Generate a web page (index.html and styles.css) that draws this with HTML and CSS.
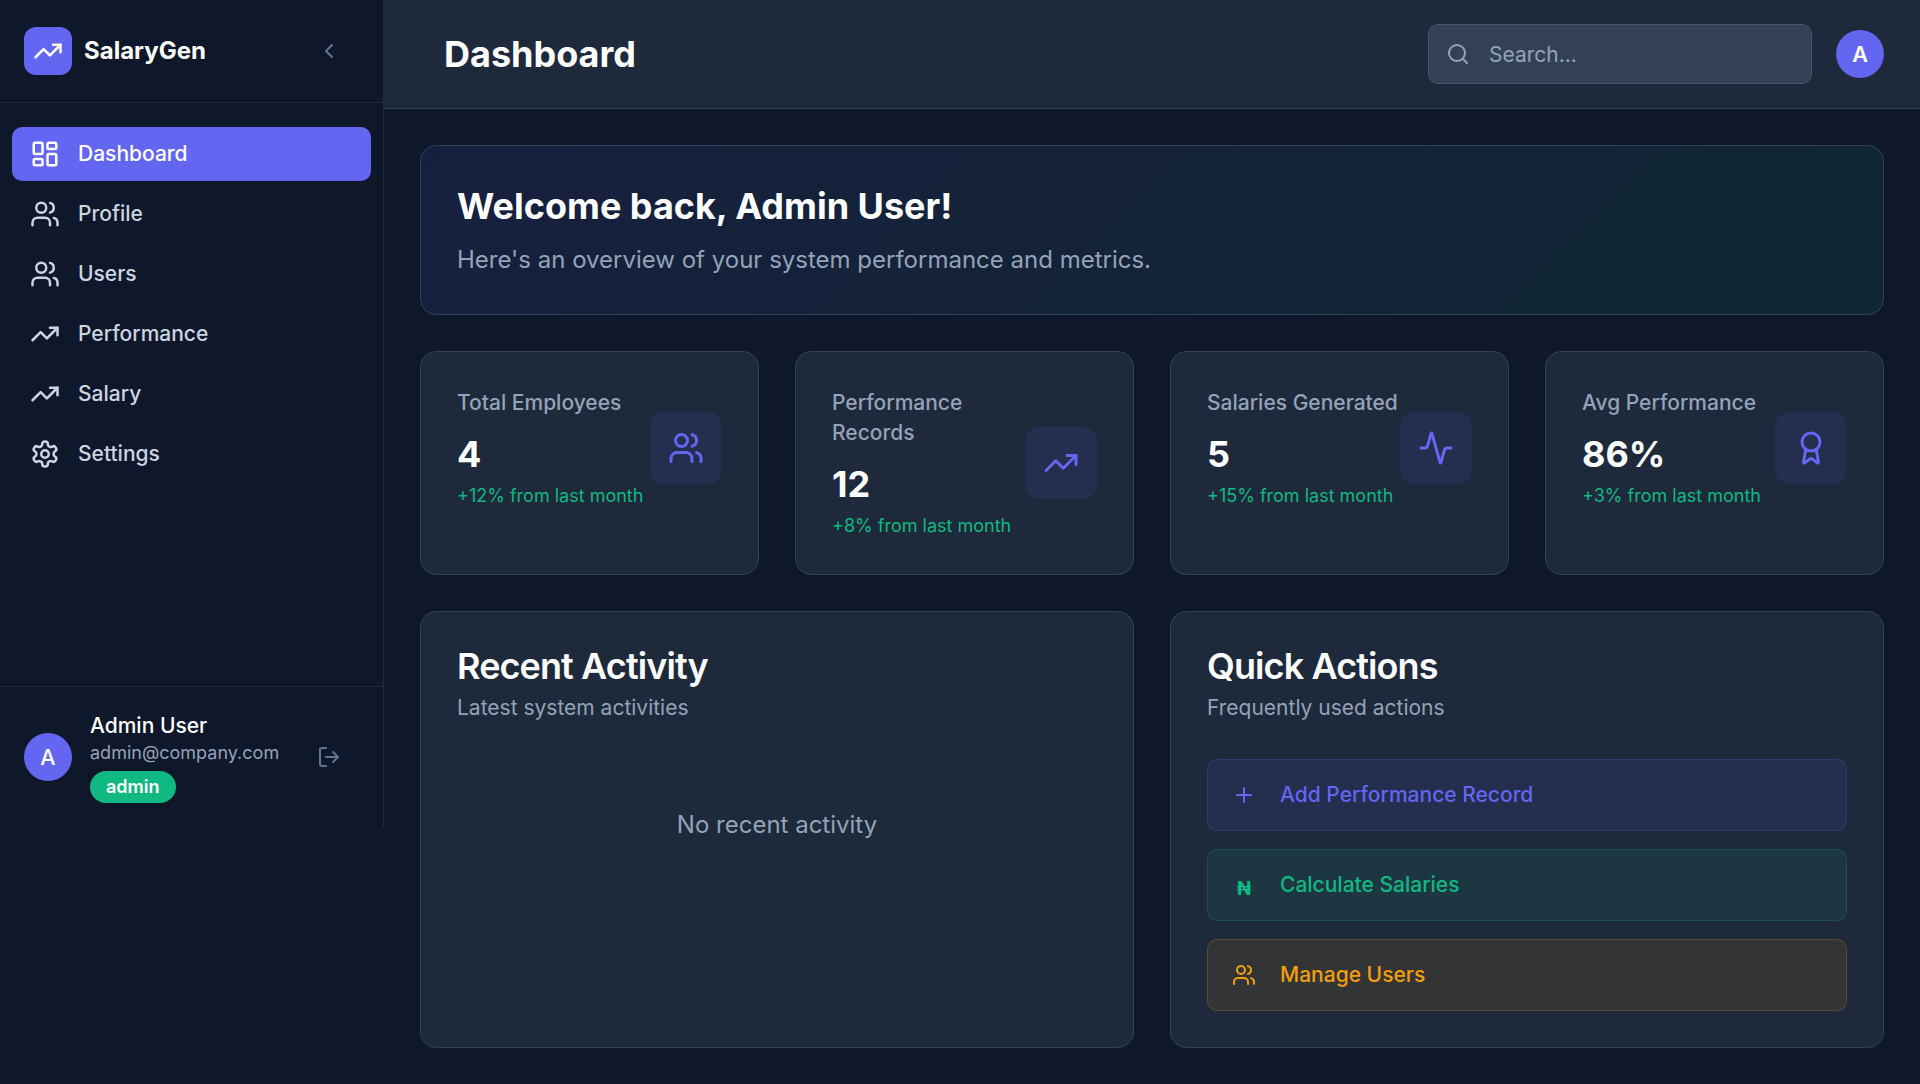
FILE: index.html
```html
<!DOCTYPE html>
<html lang="en">
<head>
    <meta charset="UTF-8">
    <meta name="viewport" content="width=device-width, initial-scale=1.0">
    <title>SalaryGen - Dashboard</title>
    <link rel="stylesheet" href="styles.css">
</head>
<body>
    <!-- Sidebar -->
    <aside class="sidebar">
        <div class="sidebar-header">
            <div class="logo-box">
                <svg class="icon icon-nav" viewBox="0 0 24 24"><polyline points="22 7 13.5 15.5 8.5 10.5 2 17"/><polyline points="16 7 22 7 22 13"/></svg>
            </div>
            <span class="logo-text">SalaryGen</span>
            <button class="side-btn">
                <svg class="icon icon-side" viewBox="0 0 24 24"><path d="m15 18-6-6 6-6"/></svg>
            </button>
        </div>

        <nav class="nav">
            <a class="nav-item active">
                <svg class="icon icon-nav" viewBox="0 0 24 24"><rect x="3" y="3" width="7" height="9" rx="1"/><rect x="14" y="3" width="7" height="5" rx="1"/><rect x="14" y="12" width="7" height="9" rx="1"/><rect x="3" y="16" width="7" height="5" rx="1"/></svg>
                Dashboard
            </a>
            <a class="nav-item">
                <svg class="icon icon-nav" viewBox="0 0 24 24"><path d="M16 21v-2a4 4 0 0 0-4-4H6a4 4 0 0 0-4 4v2"/><circle cx="9" cy="7" r="4"/><path d="M22 21v-2a4 4 0 0 0-3-3.87"/><path d="M16 3.13a4 4 0 0 1 0 7.75"/></svg>
                Profile
            </a>
            <a class="nav-item">
                <svg class="icon icon-nav" viewBox="0 0 24 24"><path d="M16 21v-2a4 4 0 0 0-4-4H6a4 4 0 0 0-4 4v2"/><circle cx="9" cy="7" r="4"/><path d="M22 21v-2a4 4 0 0 0-3-3.87"/><path d="M16 3.13a4 4 0 0 1 0 7.75"/></svg>
                Users
            </a>
            <a class="nav-item">
                <svg class="icon icon-nav" viewBox="0 0 24 24"><polyline points="22 7 13.5 15.5 8.5 10.5 2 17"/><polyline points="16 7 22 7 22 13"/></svg>
                Performance
            </a>
            <a class="nav-item">
                <svg class="icon icon-nav" viewBox="0 0 24 24"><polyline points="22 7 13.5 15.5 8.5 10.5 2 17"/><polyline points="16 7 22 7 22 13"/></svg>
                Salary
            </a>
            <a class="nav-item">
                <svg class="icon icon-nav" viewBox="0 0 24 24"><path d="M12.22 2h-.44a2 2 0 0 0-2 2v.18a2 2 0 0 1-1 1.73l-.43.25a2 2 0 0 1-2 0l-.15-.08a2 2 0 0 0-2.73.73l-.22.38a2 2 0 0 0 .73 2.73l.15.1a2 2 0 0 1 1 1.72v.51a2 2 0 0 1-1 1.74l-.15.09a2 2 0 0 0-.73 2.73l.22.38a2 2 0 0 0 2.73.73l.15-.08a2 2 0 0 1 2 0l.43.25a2 2 0 0 1 1 1.73V20a2 2 0 0 0 2 2h.44a2 2 0 0 0 2-2v-.18a2 2 0 0 1 1-1.73l.43-.25a2 2 0 0 1 2 0l.15.08a2 2 0 0 0 2.73-.73l.22-.39a2 2 0 0 0-.73-2.73l-.15-.08a2 2 0 0 1-1-1.74v-.5a2 2 0 0 1 1-1.74l.15-.09a2 2 0 0 0 .73-2.73l-.22-.38a2 2 0 0 0-2.73-.73l-.15.08a2 2 0 0 1-2 0l-.43-.25a2 2 0 0 1-1-1.73V4a2 2 0 0 0-2-2z"/><circle cx="12" cy="12" r="3"/></svg>
                Settings
            </a>
        </nav>

        <div class="sidebar-footer">
            <div class="avatar">A</div>
            <div class="user-info">
                <div class="user-name">Admin User</div>
                <div class="user-email">admin@company.com</div>
                <span class="badge">admin</span>
            </div>
            <button class="side-btn">
                <svg class="icon icon-side" viewBox="0 0 24 24"><path d="M9 21H5a2 2 0 0 1-2-2V5a2 2 0 0 1 2-2h4"/><polyline points="16 17 21 12 16 7"/><line x1="21" y1="12" x2="9" y2="12"/></svg>
            </button>
        </div>
    </aside>

    <div class="main">
        <!-- Top bar -->
        <header class="topbar">
            <h1 class="page-title">Dashboard</h1>
            <div class="topbar-right">
                <div class="search">
                    <svg class="icon icon-side" viewBox="0 0 24 24"><circle cx="11" cy="11" r="8"/><path d="m21 21-4.3-4.3"/></svg>
                    <input type="text" placeholder="Search...">
                </div>
                <div class="avatar avatar-top">A</div>
            </div>
        </header>

        <main class="content">
            <section class="welcome">
                <h2>Welcome back, Admin User!</h2>
                <p>Here's an overview of your system performance and metrics.</p>
            </section>

            <section class="stats">
                <div class="stat-card">
                    <div class="stat-row">
                        <div class="stat-text">
                            <div class="stat-label">Total Employees</div>
                            <div class="stat-value">4</div>
                            <div class="stat-change">+12% from last month</div>
                        </div>
                        <div class="stat-icon">
                            <svg class="icon icon-stat" viewBox="0 0 24 24"><path d="M16 21v-2a4 4 0 0 0-4-4H6a4 4 0 0 0-4 4v2"/><circle cx="9" cy="7" r="4"/><path d="M22 21v-2a4 4 0 0 0-3-3.87"/><path d="M16 3.13a4 4 0 0 1 0 7.75"/></svg>
                        </div>
                    </div>
                </div>
                <div class="stat-card">
                    <div class="stat-row">
                        <div class="stat-text">
                            <div class="stat-label">Performance Records</div>
                            <div class="stat-value">12</div>
                            <div class="stat-change">+8% from last month</div>
                        </div>
                        <div class="stat-icon">
                            <svg class="icon icon-stat" viewBox="0 0 24 24"><polyline points="22 7 13.5 15.5 8.5 10.5 2 17"/><polyline points="16 7 22 7 22 13"/></svg>
                        </div>
                    </div>
                </div>
                <div class="stat-card">
                    <div class="stat-row">
                        <div class="stat-text">
                            <div class="stat-label">Salaries Generated</div>
                            <div class="stat-value">5</div>
                            <div class="stat-change">+15% from last month</div>
                        </div>
                        <div class="stat-icon">
                            <svg class="icon icon-stat" viewBox="0 0 24 24"><path d="M22 12h-2.48a2 2 0 0 0-1.93 1.46l-2.35 8.36a.25.25 0 0 1-.48 0L9.24 2.18a.25.25 0 0 0-.48 0l-2.35 8.36A2 2 0 0 1 4.49 12H2"/></svg>
                        </div>
                    </div>
                </div>
                <div class="stat-card">
                    <div class="stat-row">
                        <div class="stat-text">
                            <div class="stat-label">Avg Performance</div>
                            <div class="stat-value">86%</div>
                            <div class="stat-change">+3% from last month</div>
                        </div>
                        <div class="stat-icon">
                            <svg class="icon icon-stat" viewBox="0 0 24 24"><path d="m15.477 12.89 1.515 8.526a.5.5 0 0 1-.81.47l-3.58-2.687a1 1 0 0 0-1.197 0l-3.586 2.686a.5.5 0 0 1-.81-.469l1.514-8.526"/><circle cx="12" cy="8" r="6"/></svg>
                        </div>
                    </div>
                </div>
            </section>

            <section class="panels">
                <div class="panel">
                    <h3 class="panel-title">Recent Activity</h3>
                    <p class="panel-sub">Latest system activities</p>
                    <div class="empty">No recent activity</div>
                </div>
                <div class="panel">
                    <h3 class="panel-title">Quick Actions</h3>
                    <p class="panel-sub">Frequently used actions</p>
                    <div class="actions">
                        <a class="action action-indigo">
                            <svg class="icon icon-side" viewBox="0 0 24 24"><path d="M5 12h14"/><path d="M12 5v14"/></svg>
                            Add Performance Record
                        </a>
                        <a class="action action-green">
                            <span class="naira">₦</span>
                            Calculate Salaries
                        </a>
                        <a class="action action-amber">
                            <svg class="icon icon-side" viewBox="0 0 24 24"><path d="M16 21v-2a4 4 0 0 0-4-4H6a4 4 0 0 0-4 4v2"/><circle cx="9" cy="7" r="4"/><path d="M22 21v-2a4 4 0 0 0-3-3.87"/><path d="M16 3.13a4 4 0 0 1 0 7.75"/></svg>
                            Manage Users
                        </a>
                    </div>
                </div>
            </section>
        </main>
    </div>
</body>
</html>
```

FILE: styles.css
```css
* {
    box-sizing: border-box;
}
body {
    margin: 0;
    display: flex;
    align-items: flex-start;
    min-height: 1084px;
    background: #0f172a;
    color: #f8fafc;
    font-family: Inter, "Noto Sans", sans-serif;
}
h1, h2, h3, p {
    margin: 0;
}
.icon {
    flex-shrink: 0;
    fill: none;
    stroke: currentColor;
    stroke-width: 2;
    stroke-linecap: round;
    stroke-linejoin: round;
}
.icon-nav {
    width: 30px;
    height: 30px;
}
.icon-side {
    width: 24px;
    height: 24px;
}
.icon-stat {
    width: 36px;
    height: 36px;
}

/* Sidebar */
.sidebar {
    width: 384px;
    height: 827px;
    flex-shrink: 0;
    display: flex;
    flex-direction: column;
    background: #0f172a;
    border-right: 1px solid #1e293b;
}
.sidebar-header {
    height: 103px;
    padding: 0 24px;
    display: flex;
    align-items: center;
    gap: 12px;
    border-bottom: 1px solid #1e293b;
}
.logo-box {
    width: 48px;
    height: 48px;
    border-radius: 12px;
    background: #6366f1;
    color: #fff;
    display: flex;
    align-items: center;
    justify-content: center;
}
.logo-text {
    font-size: 24px;
    font-weight: 700;
    color: #fff;
    margin-bottom: 2px;
}
.side-btn {
    margin-left: auto;
    width: 60px;
    height: 48px;
    padding: 0;
    border: none;
    background: none;
    color: #64748b;
    display: flex;
    align-items: center;
    justify-content: center;
}
.nav {
    flex: 1;
    padding: 24px 12px;
    display: flex;
    flex-direction: column;
    gap: 6px;
}
.nav-item {
    height: 54px;
    padding: 0 18px 2px;
    display: flex;
    align-items: center;
    gap: 18px;
    border-radius: 10px;
    font-size: 21px;
    font-weight: 500;
    color: #cbd5e1;
}
.nav-item .icon {
    margin-top: 2px;
}
.nav-item.active {
    background: #6366f1;
    color: #fff;
}
.sidebar-footer {
    padding: 24px;
    display: flex;
    align-items: center;
    gap: 18px;
    border-top: 1px solid #1e293b;
}
.avatar {
    width: 48px;
    height: 48px;
    flex-shrink: 0;
    border-radius: 50%;
    background: #6366f1;
    color: #fff;
    font-size: 21.6px;
    font-weight: 500;
    display: flex;
    align-items: center;
    justify-content: center;
}
.avatar-top {
    font-weight: 600;
}
.user-name {
    font-size: 21px;
    font-weight: 500;
    line-height: 29px;
    color: #fff;
}
.user-email {
    font-size: 18px;
    line-height: 25px;
    color: #94a3b8;
    margin-bottom: 6px;
}
.badge {
    display: inline-block;
    height: 32px;
    padding: 0 16px;
    border-radius: 16px;
    background: #10b981;
    color: #fff;
    font-size: 18px;
    font-weight: 600;
    line-height: 32px;
}

/* Top bar */
.main {
    flex: 1;
    min-width: 0;
}
.topbar {
    height: 109px;
    padding: 0 36px 0 60px;
    display: flex;
    align-items: center;
    justify-content: space-between;
    background: #1e293b;
    border-bottom: 1px solid #334155;
}
.page-title {
    font-size: 36px;
    font-weight: 700;
    color: #fff;
}
.topbar-right {
    display: flex;
    align-items: center;
    gap: 24px;
}
.search {
    width: 384px;
    height: 60px;
    padding: 0 17px;
    display: flex;
    align-items: center;
    gap: 19px;
    background: #334155;
    border: 1px solid #475569;
    border-radius: 10px;
    color: #94a3b8;
}
.search input {
    flex: 1;
    min-width: 0;
    border: none;
    outline: none;
    padding: 0;
    background: none;
    color: #fff;
    font-family: inherit;
    font-size: 21px;
}
.search input::placeholder {
    color: #94a3b8;
    opacity: 1;
}

/* Content */
.content {
    padding: 36px;
    display: flex;
    flex-direction: column;
    gap: 36px;
}
.welcome {
    height: 170px;
    padding: 36px;
    border: 1px solid #334155;
    border-radius: 16px;
    background: linear-gradient(135deg, rgba(99, 102, 241, 0.1), rgba(16, 185, 129, 0.1));
}
.welcome h2 {
    font-size: 36px;
    font-weight: 700;
    line-height: 48px;
    color: #fff;
    margin-bottom: 12px;
}
.welcome p {
    font-size: 24px;
    line-height: 36px;
    color: #94a3b8;
}
.stats {
    display: grid;
    grid-template-columns: repeat(4, 1fr);
    gap: 36px;
}
.stat-card {
    height: 224px;
    padding: 36px;
    background: #1e293b;
    border: 1px solid #334155;
    border-radius: 16px;
}
.stat-row {
    display: flex;
    align-items: center;
}
.stat-text {
    flex: 1;
    min-width: 0;
}
.stat-label {
    font-size: 21px;
    font-weight: 500;
    line-height: 30px;
    color: #94a3b8;
}
.stat-value {
    margin-top: 13px;
    font-size: 36px;
    font-weight: 700;
    line-height: 46px;
    color: #fff;
}
.stat-change {
    margin-top: 6px;
    font-size: 18px;
    line-height: 25px;
    color: #10b981;
}
.stat-icon {
    width: 72px;
    height: 72px;
    flex-shrink: 0;
    border-radius: 14px;
    background: rgba(99, 102, 241, 0.1);
    color: #6366f1;
    display: flex;
    align-items: center;
    justify-content: center;
}
.panels {
    display: grid;
    grid-template-columns: 1fr 1fr;
    gap: 36px;
}
.panel {
    height: 437px;
    padding: 36px;
    background: #1e293b;
    border: 1px solid #334155;
    border-radius: 16px;
}
.panel-title {
    font-size: 36px;
    font-weight: 600;
    letter-spacing: -0.025em;
    line-height: 36px;
    color: #fff;
    margin-bottom: 9px;
}
.panel-sub {
    font-size: 21px;
    line-height: 30px;
    color: #94a3b8;
}
.empty {
    margin-top: 84px;
    font-size: 24px;
    line-height: 36px;
    text-align: center;
    color: #94a3b8;
}
.actions {
    margin-top: 36px;
    display: flex;
    flex-direction: column;
    gap: 18px;
}
.action {
    height: 72px;
    padding: 0 24px 2px;
    display: flex;
    align-items: center;
    gap: 24px;
    border-radius: 10px;
    border: 1px solid;
    font-size: 21px;
    font-weight: 500;
}
.action .icon {
    margin-top: 2px;
}
.action-indigo {
    background: rgba(99, 102, 241, 0.1);
    border-color: rgba(99, 102, 241, 0.2);
    color: #6366f1;
}
.action-green {
    background: rgba(16, 185, 129, 0.1);
    border-color: rgba(16, 185, 129, 0.2);
    color: #10b981;
}
.action-amber {
    background: rgba(245, 158, 11, 0.1);
    border-color: rgba(245, 158, 11, 0.2);
    color: #f59e0b;
}
.naira {
    width: 24px;
    text-align: center;
    font-size: 19px;
    font-weight: 700;
    padding-top: 8px;
}
```
